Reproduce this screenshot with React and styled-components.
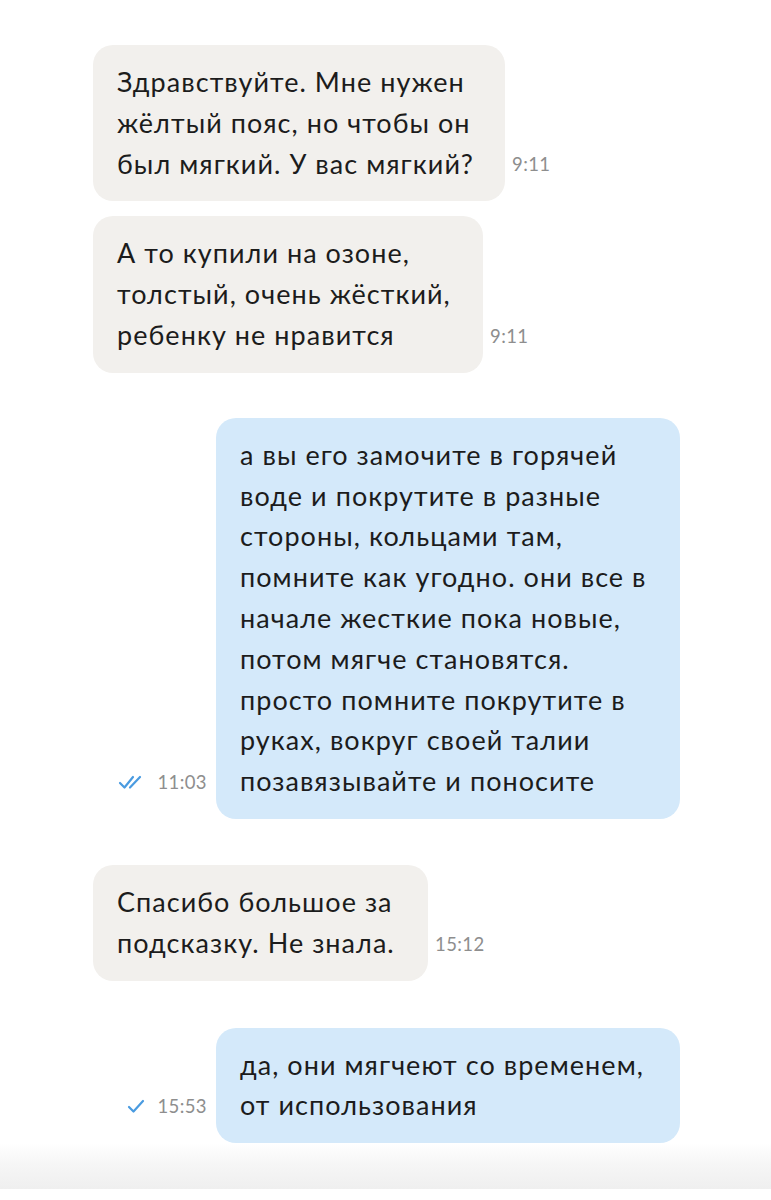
import React from 'react'
import styled, { createGlobalStyle } from 'styled-components'

const GlobalStyle = createGlobalStyle`
  html, body {
    margin: 0;
    padding: 0;
    background: #ffffff;
  }
  body {
    font-family: Lato, "Noto Sans", sans-serif;
    color: #1c1c1c;
  }
`

const Page = styled.div`
  width: 771px;
  min-height: 1200px;
  background: #ffffff;
`

const Feed = styled.div`
  display: flex;
  flex-direction: column;
  padding: 45px 91px 0 93px;
`

const Row = styled.div`
  display: flex;
  align-items: flex-end;
  justify-content: ${p => (p.$out ? 'flex-end' : 'flex-start')};
  gap: ${p => (p.$out ? '9px' : '7px')};
  margin-top: ${p => p.$gap || 0}px;
`

const Bubble = styled.div`
  background: ${p => (p.$out ? '#d4e9fa' : '#f2f0ed')};
  border-radius: 20px;
  padding: 17px 22px 17px 24px;
  font-size: 27px;
  line-height: 40.8px;
  white-space: pre;
  letter-spacing: 1.05px;
  width: ${p => (p.$w ? `${p.$w}px` : 'auto')};
  box-sizing: border-box;
`

const Meta = styled.div`
  display: flex;
  align-items: center;
  gap: 11px;
  margin-bottom: 26px;
  font-size: 18.5px;
  letter-spacing: 0.4px;
  color: #8e8e8e;
  line-height: 22px;
`

const Shade = styled.div`
  height: 46px;
  background: linear-gradient(180deg, #ffffff 0%, #f6f6f6 45%, #efefef 100%);
`

const Check = ({ double }) => (
  <svg width={double ? 28 : 20} height="16" viewBox={double ? '0 0 28 16' : '0 0 20 16'} fill="none"
    stroke="#4a9be0" strokeWidth="2.2" strokeLinecap="round" strokeLinejoin="round">
    {double ? (
      <>
        <path d="M2 9l4.5 4.5L15 3" />
        <path d="M12 13.5L22 3" />
      </>
    ) : (
      <path d="M3 9l4.5 4.5L17 3" />
    )}
  </svg>
)

const messages = [
  { text: 'Здравствуйте. Мне нужен\nжёлтый пояс, но чтобы он\nбыл мягкий. У вас мягкий?', time: '9:11', w: 412 },
  { text: 'А то купили на озоне,\nтолстый, очень жёсткий,\nребенку не нравится', time: '9:11', gap: 15, w: 390 },
  {
    out: true, read: true, gap: 45, w: 464, time: '11:03',
    text: 'а вы его замочите в горячей\nводе и покрутите в разные\nстороны, кольцами там,\nпомните как угодно. они все в\nначале жесткие пока новые,\nпотом мягче становятся.\nпросто помните покрутите в\nруках, вокруг своей талии\nпозавязывайте и поносите'
  },
  { text: 'Спасибо большое за\nподсказку. Не знала.', time: '15:12', gap: 46, w: 335 },
  { out: true, gap: 47, w: 464, time: '15:53', text: 'да, они мягчеют со временем,\nот использования' }
]

export default function App() {
  return (
    <Page>
      <GlobalStyle />
      <Feed>
        {messages.map((m, i) => (
          <Row key={i} $out={m.out} $gap={m.gap}>
            {m.out && (
              <Meta>
                <Check double={m.read} />
                <span>{m.time}</span>
              </Meta>
            )}
            <Bubble $out={m.out} $w={m.w}>{m.text}</Bubble>
            {!m.out && <Meta>{m.time}</Meta>}
          </Row>
        ))}
      </Feed>
      <Shade />
    </Page>
  )
}
